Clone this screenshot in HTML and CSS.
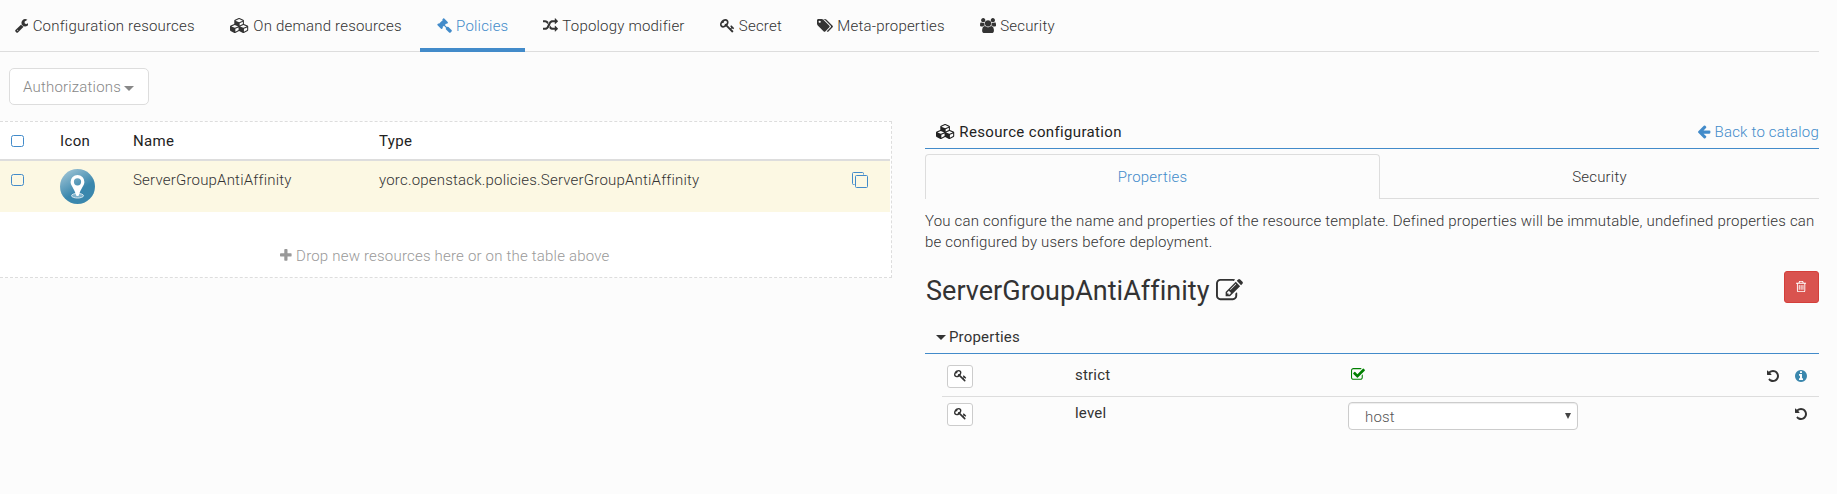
FILE: index.html
```html
<!DOCTYPE html>
<html lang="en">
<head>
<meta charset="utf-8">
<title>Policies</title>
<link rel="stylesheet" href="styles.css">
</head>
<body>
<svg class="defs" width="0" height="0">
  <symbol id="wrench" viewBox="64 0 1664 1792"><path d="M448 1472q0-26-19-45t-45-19-45 19-19 45 19 45 45 19 45-19 19-45zm644-420l-682 682q-37 37-90 37-52 0-91-37l-106-108q-38-36-38-90 0-53 38-91l681-681q39 98 114.5 173.5t173.5 114.5zm634-435q0 39-23 106-47 134-164.5 217.5t-258.5 83.5q-185 0-316.5-131.5t-131.5-316.5 131.5-316.5 316.5-131.5q58 0 121.5 16.5t107.5 46.5q16 11 16 28t-16 28l-293 169v224l193 107q5-3 79-48.5t135.5-81 70.5-35.5q15 0 23.5 10t8.5 25z"/></symbol>
  <symbol id="cubes" viewBox="0 0 2304 1792"><path d="M640 1632l384-192v-314l-384 164v342zm-64-454l404-173-404-173-404 173zm1088 454l384-192v-314l-384 164v342zm-64-454l404-173-404-173-404 173zm-448-293l384-165v-266l-384 164v267zm-64-379l441-189-441-189-441 189zm1088 518v416q0 36-19 67t-52 47l-448 224q-25 14-57 14t-57-14l-448-224q-4-2-7-4-2 2-7 4l-448 224q-25 14-57 14t-57-14l-448-224q-33-16-52-47t-19-67v-416q0-38 21.500-70t56.500-48l434-186v-400q0-38 21.500-70t56.500-48l448-192q23-10 50-10t50 10l448 192q35 16 56.500 48t21.500 70v400l434 186q36 16 57 48t21 70z"/></symbol>
  <symbol id="gavel" viewBox="0 0 1792 1792"><path d="M1771 1536q0 53-37 90l-107 108q-39 37-91 37-53 0-90-37l-363-364q-38-36-38-90 0-53 43-96l-256-256-126 126q-14 14-34 14t-34-14q2 2 12.500 12t12.500 13 10 11.500 10 13.500 6 13.500 5.500 16.500 1.500 18q0 38-28 68-3 3-16.500 18t-19 20.500-18.500 16.500-22 15.500-22 9-26 4.500q-40 0-68-28l-408-408q-28-28-28-68 0-13 4.500-26t9-22 15.500-22 16.500-18.500 20.500-19 18-16.500q30-28 68-28 10 0 18 1.500t16.500 5.500 13.500 6 13.500 10 11.500 10 13 12.500 12 12.500q-14-14-14-34t14-34l348-348q14-14 34-14t34 14q-2-2-12.500-12t-12.500-13-10-11.500-10-13.500-6-13.500-5.500-16.500-1.500-18q0-38 28-68 3-3 16.500-18t19-20.500 18.500-16.500 22-15.500 22-9 26-4.500q40 0 68 28l408 408q28 28 28 68 0 13-4.500 26t-9 22-15.500 22-16.500 18.500-20.500 19-18 16.500q-30 28-68 28-10 0-18-1.500t-16.500-5.500-13.500-6-13.500-10-11.500-10-13-12.500-12-12.500q14 14 14 34t-14 34l-126 126 256 256q43-43 96-43 52 0 91 37l363 363q37 39 37 91z"/></symbol>
  <symbol id="random" viewBox="0 0 1792 1792"><path d="M666 481q-60 92-137 273-22-45-37-72.500t-40.500-63.500-51-56.500-63-35-81.500-14.500h-224q-14 0-23-9t-9-23v-192q0-14 9-23t23-9h224q250 0 410 225zm1126 799q0 14-9 23l-320 320q-9 9-23 9-13 0-22.500-9.500t-9.500-22.500v-192q-32 0-85 .5t-81 1-73-1-71-5-64-10.500-63-18.500-58-28.500-59-40-55-53.500-56-69.500q59-93 136-273 22 45 37 72.500t40.500 63.500 51 56.500 63 35 81.500 14.500h256v-192q0-14 9-23t23-9q12 0 24 10l319 319q9 9 9 23zm0-896q0 14-9 23l-320 320q-9 9-23 9-13 0-22.500-9.500t-9.500-22.500v-192h-256q-48 0-87 15t-69 45-51 61.500-45 77.500q-32 62-78 171-29 66-49.500 111t-54 105-64 100-74 83-90 68.500-106.500 42-128 16.500h-224q-14 0-23-9t-9-23v-192q0-14 9-23t23-9h224q48 0 87-15t69-45 51-61.500 45-77.500q32-62 78-171 29-66 49.500-111t54-105 64-100 74-83 90-68.500 106.500-42 128-16.500h256v-192q0-14 9-23t23-9q12 0 24 10l319 319q9 9 9 23z"/></symbol>
  <symbol id="key" viewBox="0 0 1792 1792"><path d="M832 512q0-80-56-136t-136-56-136 56-56 136q0 42 19 83-41-19-83-19-80 0-136 56t-56 136 56 136 136 56 136-56 56-136q0-42-19-83 41 19 83 19 80 0 136-56t56-136zm851 704q0 17-49 66t-66 49q-9 0-28.500-16t-36.500-33-38.500-40-24.500-26l-96 96 220 220q28 28 28 68 0 42-39 81t-81 39q-40 0-68-28l-671-671q-176 131-365 131-163 0-265.500-102.500t-102.500-265.500q0-160 95-313t248-248 313-95q163 0 265.500 102.500t102.500 265.500q0 189-131 365l355 355 96-96q-3-3-26-24.500t-40-38.500-33-36.500-16-28.500q0-17 49-66t66-49q13 0 23 10 6 6 46 44.500t82 79.500 86.500 86 73 78 28.500 41z"/></symbol>
  <symbol id="tags" viewBox="0 0 1920 1792"><path d="M448 448q0-53-37.500-90.500t-90.500-37.500-90.500 37.500-37.500 90.500 37.500 90.500 90.500 37.500 90.500-37.500 37.500-90.500zm1067 576q0 53-37 90l-491 492q-39 37-91 37-53 0-90-37l-715-716q-38-37-64.500-101t-26.500-117v-416q0-52 38-90t90-38h416q53 0 117 26.500t102 64.500l715 714q37 39 37 91zm384 0q0 53-37 90l-491 492q-39 37-91 37-36 0-59-14t-53-45l470-470q37-37 37-90 0-52-37-91l-715-714q-38-38-102-64.500t-117-26.500h224q53 0 117 26.500t102 64.500l715 714q37 39 37 91z"/></symbol>
  <symbol id="users" viewBox="0 0 1920 1792"><path d="M593 896q-162 5-265 128h-134q-82 0-138-40.500t-56-118.500q0-353 124-353 6 0 43.500 21t97.500 42.500 119 21.500q67 0 133-23-5 37-5 66 0 139 81 256zm1071 637q0 120-73 189.500t-194 69.500h-874q-121 0-194-69.500t-73-189.500q0-53 3.500-103.500t14-109 26.500-108.500 43-97.500 62-81 85.500-53.500 111.500-20q10 0 43 21.500t73 48 107 48 135 21.500 135-21.500 107-48 73-48 43-21.500q61 0 111.500 20t85.500 53.500 62 81 43 97.500 26.500 108.500 14 109 3.500 103.500zm-1024-1277q0 106-75 181t-181 75-181-75-75-181 75-181 181-75 181 75 75 181zm704 384q0 159-112.500 271.500t-271.500 112.500-271.500-112.500-112.500-271.500 112.500-271.500 271.500-112.500 271.500 112.500 112.500 271.500zm576 225q0 78-56 118.500t-138 40.500h-134q-103-123-265-128 81-117 81-256 0-29-5-66 66 23 133 23 59 0 119-21.500t97.500-42.500 43.500-21q124 0 124 353zm-128-609q0 106-75 181t-181 75-181-75-75-181 75-181 181-75 181 75 75 181z"/></symbol>
  <symbol id="plus" viewBox="192 0 1408 1792"><path d="M1600 736v192q0 40-28 68t-68 28h-416v416q0 40-28 68t-68 28h-192q-40 0-68-28t-28-68v-416h-416q-40 0-68-28t-28-68v-192q0-40 28-68t68-28h416v-416q0-40 28-68t68-28h192q40 0 68 28t28 68v416h416q40 0 68 28t28 68z"/></symbol>
  <symbol id="arrow-left" viewBox="64 0 1664 1792"><path d="M1664 896v128q0 53-32.500 90.500t-84.500 37.500h-704l293 294q38 36 38 90t-38 90l-75 76q-37 37-90 37-52 0-91-37l-651-652q-37-37-37-90 0-52 37-91l651-650q38-38 91-38 52 0 90 38l75 74q38 38 38 91t-38 91l-293 293h704q52 0 84.500 37.500t32.500 90.500z"/></symbol>
  <symbol id="check" viewBox="64 0 1664 1792"><path d="M1472 930v318q0 119-84.500 203.500t-203.500 84.500h-832q-119 0-203.500-84.500t-84.500-203.500v-832q0-119 84.500-203.500t203.500-84.500h832q63 0 117 25 15 7 18 23 3 17-9 29l-49 49q-10 10-23 10-3 0-9-2-23-6-45-6h-832q-66 0-113 47t-47 113v832q0 66 47 113t113 47h832q66 0 113-47t47-113v-254q0-13 9-22l64-64q10-10 23-10 6 0 12 3 20 8 20 29zm231-489l-814 814q-24 24-57 24t-57-24l-430-430q-24-24-24-57t24-57l110-110q24-24 57-24t57 24l263 263 647-647q24-24 57-24t57 24l110 110q24 24 24 57t-24 57z"/></symbol>
  <symbol id="edit" viewBox="0 0 1792 1792"><path d="M888 1184l116-116-152-152-116 116v56h96v96h56zm440-720q-16-16-33 1l-350 350q-17 17-1 33t33-1l350-350q17-17 1-33zm80 594v190q0 119-84.500 203.500t-203.500 84.500h-832q-119 0-203.500-84.500t-84.500-203.500v-832q0-119 84.500-203.500t203.500-84.500h832q63 0 117 25 15 7 18 23 3 17-9 29l-49 49q-14 14-32 8-23-6-45-6h-832q-66 0-113 47t-47 113v832q0 66 47 113t113 47h832q66 0 113-47t47-113v-126q0-13 9-22l64-64q15-15 35-7t20 29zm-96-738l288 288-672 672h-288v-288zm444 132l-92 92-288-288 92-92q28-28 68-28t68 28l152 152q28 28 28 68t-28 68z"/></symbol>
  <symbol id="trash" viewBox="192 0 1408 1792"><path d="M704 736v576q0 14-9 23t-23 9h-64q-14 0-23-9t-9-23v-576q0-14 9-23t23-9h64q14 0 23 9t9 23zm256 0v576q0 14-9 23t-23 9h-64q-14 0-23-9t-9-23v-576q0-14 9-23t23-9h64q14 0 23 9t9 23zm256 0v576q0 14-9 23t-23 9h-64q-14 0-23-9t-9-23v-576q0-14 9-23t23-9h64q14 0 23 9t9 23zm128 724v-948h-896v948q0 22 7 40.500t14.500 27 10.500 8.500h832q3 0 10.500-8.500t14.500-27 7-40.500zm-672-1076h448l-48-117q-7-9-17-11h-317q-10 2-17 11zm928 32v64q0 14-9 23t-23 9h-96v948q0 83-47 143.500t-113 60.500h-832q-66 0-113-58.500t-47-141.500v-952h-96q-14 0-23-9t-9-23v-64q0-14 9-23t23-9h309l70-167q15-37 54-63t79-26h320q40 0 79 26t54 63l70 167h309q14 0 23 9t9 23z"/></symbol>
  <symbol id="undo" viewBox="128 0 1536 1792"><path d="M1664 896q0 156-61 298t-164 245-245 164-298 61q-172 0-327-72.500t-264-204.500q-7-10-6.500-22.500t8.500-20.500l137-138q10-9 25-9 16 2 23 12 73 95 179 147t225 52q104 0 198.500-40.500t163.500-109.500 109.500-163.500 40.500-198.500-40.500-198.500-109.500-163.500-163.500-109.500-198.500-40.500q-98 0-188 35.500t-160 101.500l137 138q31 30 14 69-17 40-59 40h-448q-26 0-45-19t-19-45v-448q0-42 40-59 39-17 69 14l130 129q107-101 244.500-156.500t284.500-55.500q156 0 298 61t245 164 164 245 61 298z"/></symbol>
  <symbol id="info" viewBox="128 0 1536 1792"><path d="M1152 1376v-160q0-14-9-23t-23-9h-96v-512q0-14-9-23t-23-9h-320q-14 0-23 9t-9 23v160q0 14 9 23t23 9h96v320h-96q-14 0-23 9t-9 23v160q0 14 9 23t23 9h448q14 0 23-9t9-23zm-128-896v-160q0-14-9-23t-23-9h-192q-14 0-23 9t-9 23v160q0 14 9 23t23 9h192q14 0 23-9t9-23zm640 416q0 209-103 385.500t-279.500 279.500-385.500 103-385.500-103-279.500-279.500-103-385.500 103-385.500 279.500-279.500 385.500-103 385.500 103 279.500 279.500 103 385.500z"/></symbol>
</svg>

<nav class="tabs">
  <a class="tab"><svg class="fa w1664"><use href="#wrench"/></svg> Configuration resources</a>
  <a class="tab"><svg class="fa w2304"><use href="#cubes"/></svg> On demand resources</a>
  <a class="tab active"><svg class="fa"><use href="#gavel"/></svg> Policies</a>
  <a class="tab"><svg class="fa"><use href="#random"/></svg> Topology modifier</a>
  <a class="tab"><svg class="fa"><use href="#key"/></svg> Secret</a>
  <a class="tab"><svg class="fa w1920"><use href="#tags"/></svg> Meta-properties</a>
  <a class="tab"><svg class="fa w1920"><use href="#users"/></svg> Security</a>
</nav>

<div class="toolbar">
  <button class="authorizations">Authorizations <span class="caret"></span></button>
</div>

<main class="columns">
  <section class="resources">
    <div class="row head">
      <span><i class="checkbox"></i></span><span>Icon</span><span>Name</span><span>Type</span><span></span>
    </div>
    <div class="row selected">
      <span><i class="checkbox"></i></span>
      <svg class="pin" viewBox="0 0 35 35">
        <defs><linearGradient id="disc" x1="0.1" y1="0" x2="0.7" y2="1"><stop offset="0" stop-color="#a5c8d8"/><stop offset="0.65" stop-color="#3a87ad"/></linearGradient></defs>
        <circle cx="17.500" cy="17.500" r="17.500" fill="url(#disc)"/>
        <ellipse cx="17.500" cy="26.700" rx="6" ry="2.300" fill="#7fb2cb" stroke="#d5e6ee"/>
        <path fill="#fff" fill-rule="evenodd" d="M17.500 6a6.900 6.900 0 0 0-6.900 7c0 3.500 3.900 6.800 5.600 13.500q1.300 1 2.600 0c1.700-6.700 5.600-10 5.600-13.500a6.900 6.900 0 0 0-6.900-7zm0 3.200a3.600 3.600 0 1 1 0 7.200 3.600 3.600 0 0 1 0-7.200z"/>
      </svg>
      <span>ServerGroupAntiAffinity</span>
      <span>yorc.openstack.policies.ServerGroupAntiAffinity</span>
      <svg class="copy" viewBox="0 0 16 16"><path d="M2.500 12.500h-1a1 1 0 0 1-1-1v-10a1 1 0 0 1 1-1h9a1 1 0 0 1 1 1v1"/><rect x="3.500" y="3.500" width="12" height="12" rx="1"/></svg>
    </div>
    <div class="drop"><svg class="fa w1408"><use href="#plus"/></svg> Drop new resources here or on the table above</div>
  </section>

  <section class="details">
    <header class="panel-head">
      <strong><svg class="fa w2304"><use href="#cubes"/></svg> Resource configuration</strong>
      <a class="back"><svg class="fa w1664"><use href="#arrow-left"/></svg> Back to catalog</a>
    </header>
    <div class="subtabs">
      <a class="subtab current">Properties</a>
      <a class="subtab">Security</a>
    </div>
    <p class="hint">You can configure the name and properties of the resource template. Defined properties will be immutable, undefined properties can be configured by users before deployment.</p>
    <div class="title">
      <h3>ServerGroupAntiAffinity <svg class="fa"><use href="#edit"/></svg></h3>
      <button class="delete"><svg class="fa w1408"><use href="#trash"/></svg></button>
    </div>
    <div class="group"><span class="caret"></span> Properties</div>
    <div class="prop">
      <button class="secret"><svg class="fa"><use href="#key"/></svg></button>
      <span class="label">strict</span>
      <span class="value"><svg class="fa w1664 ok"><use href="#check"/></svg></span>
      <span class="actions"><svg class="fa w1536"><use href="#undo"/></svg><svg class="fa w1536 info"><use href="#info"/></svg></span>
    </div>
    <div class="prop last">
      <button class="secret"><svg class="fa"><use href="#key"/></svg></button>
      <span class="label">level</span>
      <span class="select">host<svg class="arrow" viewBox="0 0 6 6"><path d="M0 0h6L3 6z"/></svg></span>
      <span class="actions"><svg class="fa w1536"><use href="#undo"/></svg></span>
    </div>
  </section>
</main>
</body>
</html>
```

FILE: styles.css
```css
* { box-sizing: border-box; }
body {
  margin: 0;
  background: #fcfcfc;
  color: #333;
  font: 300 15px/21px Roboto, "Liberation Sans", sans-serif;
  letter-spacing: 0.2px;
}
button { font: inherit; color: inherit; letter-spacing: inherit; }
.defs { display: block; height: 0; }
.fa { width: 1em; height: 1em; fill: currentColor; vertical-align: -0.14em; }
.w1408 { width: 0.786em; }
.w1536 { width: 0.857em; }
.w1664 { width: 0.929em; }
.w1920 { width: 1.071em; }
.w2304 { width: 1.286em; }
.caret {
  display: inline-block;
  margin: 0 -0.5px;
  border: 5px solid transparent;
  border-top: 5px solid;
  border-bottom: 0;
  vertical-align: 2px;
}

.tabs {
  display: flex;
  gap: 2px;
  width: 1819px;
  height: 52px;
  border-bottom: 1px solid #ddd;
}
.tab { height: 52px; padding: 16px 16.5px 0; white-space: nowrap; }
.tab .fa { margin-right: 0.4px; }
.tab:first-child { padding-left: 14.5px; }
.tab.active { color: #428bca; border-bottom: 4px solid #428bca; }

.toolbar { padding: 16px 9px; }
.authorizations {
  display: block;
  width: 140px;
  height: 37px;
  padding: 1px 0 0 13px;
  text-align: left;
  color: #888;
  background: #fff;
  border: 1px solid #ddd;
  border-radius: 5px;
}
.authorizations .caret { vertical-align: 1px; }

.columns { display: grid; grid-template-columns: 892px 894px; gap: 33px; align-items: start; }

.resources {
  height: 157px;
  background: #fff;
  border: 1px dashed #ddd;
  border-left: 0;
  padding-right: 1px;
}
.row { display: grid; grid-template-columns: 60px 73px 246px 473px 1fr; }
.row.head {
  height: 39px;
  padding-top: 9px;
  font-weight: 400;
  letter-spacing: 0.35px;
  color: #222;
  border-bottom: 2px solid #ddd;
}
.row.selected { height: 51px; padding-top: 8px; background: #fcf8e3; }
.row.selected > span { padding-top: 1px; }
.checkbox {
  display: block;
  width: 13px;
  height: 12px;
  margin: 4px 0 0 11px;
  border: 1px solid #428bca;
  border-radius: 2.5px;
}
.pin { width: 35px; height: 35px; }
.copy { width: 16px; height: 16px; margin-top: 3px; fill: none; stroke: #428bca; }
.drop { padding: 34px 0 0; text-align: center; color: #999; }

.panel-head {
  display: flex;
  justify-content: space-between;
  height: 28px;
  padding: 1px 0 0 11px;
  border-bottom: 1px solid #428bca;
}
strong { font-weight: 400; letter-spacing: 0.35px; color: #222; }
.back { color: #428bca; }
.subtabs { display: grid; grid-template-columns: 455px 439px; height: 45px; margin-top: 5px; }
.subtab { padding-top: 13px; text-align: center; border-bottom: 1px solid #ddd; }
.subtab.current {
  padding-top: 12px;
  color: #428bca;
  border: 1px solid #ddd;
  border-bottom: 0;
  border-radius: 4px 4px 0 0;
}
.hint { margin: 12px 0 0; }
.title { display: flex; justify-content: space-between; height: 53px; margin-top: 18px; }
.title h3 { margin: 5px 0 0 1px; font-size: 27px; line-height: 30px; font-weight: 400; letter-spacing: 0.03px; }
.delete {
  width: 35px;
  height: 32px;
  padding: 0;
  color: #fff;
  font-size: 13px;
  background: #d9534f;
  border: 1px solid #d43f3a;
  border-radius: 3px;
}
.group { height: 30px; padding: 3px 0 0 11px; font-weight: 400; border-bottom: 1px solid #428bca; }
.prop {
  display: grid;
  grid-template-columns: 128px 273px 230px 1fr;
  align-items: start;
  height: 43px;
  margin-left: 17px;
  padding: 11px 12.5px 0 5px;
  border-bottom: 1px solid #ddd;
}
.prop.last { height: 40px; padding-top: 6px; border: 0; }
.secret {
  width: 26px;
  height: 23px;
  padding: 0;
  font-size: 13px;
  line-height: 18px;
  background: #fff;
  border: 1px solid #ccc;
  border-radius: 3px;
}
.label { font-weight: 400; }
.value { padding-left: 3px; }
.ok { color: #008000; }
.actions { display: flex; justify-content: flex-end; gap: 16px; padding-top: 4px; font-size: 14px; }
.info { color: #3a87ad; }
.select {
  display: flex;
  justify-content: space-between;
  height: 28px;
  margin-top: -1px;
  padding: 4px 6px 0 16px;
  color: #555;
  background: #fff;
  border: 1px solid #ccc;
  border-radius: 4px;
  box-shadow: inset 0 1px 1px rgba(0, 0, 0, 0.075);
}
.arrow { width: 6px; height: 6px; margin-top: 6px; fill: #444; }
```
